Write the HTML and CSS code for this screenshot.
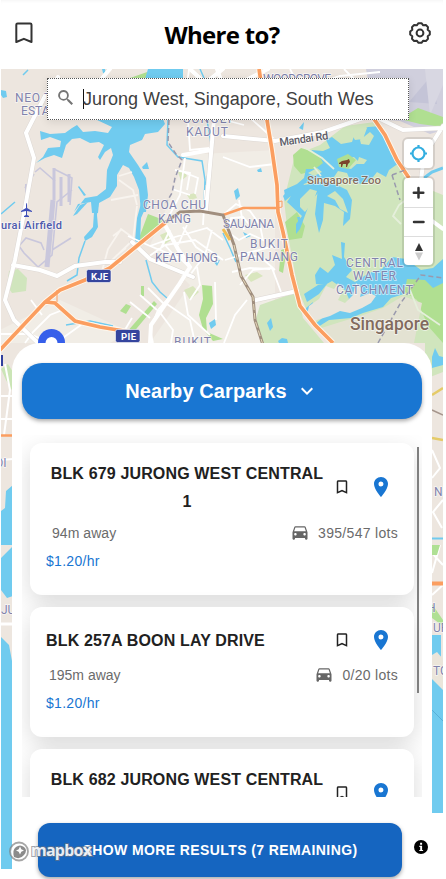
FILE: index.html
```html
<!DOCTYPE html>
<html lang="en">
<head>
<meta charset="utf-8">
<title>Where to?</title>
<link rel="stylesheet" href="styles.css">
</head>
<body>
<svg class="symbols" aria-hidden="true">
  <symbol id="bookmark" viewBox="0 0 24 24"><path d="M17 3H7c-1.100 0-2 .9-2 2v16l7-3 7 3V5c0-1.100-.9-2-2-2zm0 15-5-2.180L7 18V5h10v13z"/></symbol>
  <symbol id="pin" viewBox="0 0 24 24"><path d="M12 2C8.130 2 5 5.130 5 9c0 5.250 7 13 7 13s7-7.750 7-13c0-3.870-3.130-7-7-7zm0 9.500a2.500 2.500 0 1 1 0-5 2.500 2.500 0 0 1 0 5z"/></symbol>
  <symbol id="car" viewBox="0 0 24 24"><path d="M18.920 5.010C18.720 4.420 18.160 4 17.500 4h-11c-.66 0-1.210.42-1.420 1.010L3 11v8c0 .55.45 1 1 1h1c.55 0 1-.45 1-1v-1h12v1c0 .55.45 1 1 1h1c.55 0 1-.45 1-1v-8l-2.080-5.990zM6.500 15c-.83 0-1.500-.67-1.500-1.500S5.670 12 6.500 12s1.500.67 1.500 1.500S7.330 15 6.500 15zm11 0c-.83 0-1.500-.67-1.500-1.500s.67-1.500 1.500-1.500 1.500.67 1.500 1.500-.67 1.500-1.500 1.500zM5 10l1.500-4.500h11L19 10H5z"/></symbol>
</svg>
<div class="app">
  <svg class="map" viewBox="1 69 442 800" width="442" height="800">
    <rect x="1" y="69" width="442" height="800" fill="#ede6df"/>
    <!-- developed land -->
    <g fill="#f1ede6">
      <path d="M185 155L275 150V343H150L190 285L150 245L170 200Z"/>
      <path d="M0 330L60 300L130 332L110 343H0Z"/>
    </g>
    <path d="M366 69H443V130L430 134L400 121L375 119Z" fill="#d0cfdd"/>
    <path d="M409 102l22-26 6 28z" fill="#c4c4d7"/>
    <path d="M425 69H443V85L430 115Z" fill="#d8d7e2"/>
    <!-- parks -->
    <g fill="#d0e5bd">
      <path d="M295 155L320 145L345 126L375 122L393 150L406 180L443 195V343H332L310 318L298 290L288 235L284 200Z"/>
      <path d="M260 305L297 292L303 318L324 343H262L255 322Z"/>
      <path d="M9 271l9-2 9 9-1 13-14 2-5-7z"/>
    </g>
    <g fill="#b0df91">
      <path d="M400 119L418 108L443 117V127L420 124Z"/>
      <path d="M405 268L443 276V343L428 326L417 300L402 290Z"/>
      <path d="M148 214L169 222L141 243L139 238Z"/>
      <path d="M130 78l20-7-4 8zM106 120l12 3 14-1-5-4z"/>
      <path d="M285 222l12-10 8 14-3 12-13 2zM281 250l6-2-4 25-4-2z"/>
      <path d="M202 285l10 1 1 18-7 14 1 14 16 7-10 2-10-12-4-14 4-16z"/>
      <path d="M293 155l8-7 20 6 8 9-12 7-16 4-7-8z"/>
      <path d="M120 311l6-7 5 2-5 8zM141 286h3v10h-3zM126 333l28-32 3 3-25 30z"/>
    </g>
    <g fill="#d9e6be">
      <path d="M178 172l6-2 3 6-6 5zM187 195l8-2 2 5-7 2zM160 235l9-4 5 7-9 6zM245 275l12-3 6 4-12 6zM184 290l9-4 6 6-9 8z"/>
    </g>
    <!-- water -->
    <g fill="#70cbef">
      <path d="M148 69H183V79H145Z"/>
      <path d="M128 119H163L165 124L158 132L145 134L142 140L130 145L129 152L138 165L146 178L148 195L146 212H141L139 190L134 177L129 168L123 165L117 175V186L110 197L99 203L98 213H92L91 202L78 204L74 212L85 198L97 196L106 189L107 170L113 155L111 148L105 152L100 160L98 157L104 145L99 142L90 143L80 138L72 139L66 145L62 158L54 155L45 158L36 163L43 157L48 148L60 147L61 141L50 137L41 140L40 131L50 134L65 133L72 128L77 125L83 132L95 131L108 133L112 127L97 120Z"/>
      <path d="M142 167l5-5 2 7-6 0zM79 186l7 9-2 1-6-9z"/>
      <path d="M93 200H99L97 215L98 227L92 237L85 241L84 237L93 227L94 212Z"/>
      <path d="M88 202L77 214L73 216L80 205Z"/>
      <path d="M142 200H149L141 218L140 243L135 241L137 218Z"/>
      <path d="M1 90l5 1 1 6-4 1-2-3zM102 69l3 0 1 6-3-2z"/>
      <path d="M368 127L382 126L385 139L391 154L399 163L389 170L386 177L377 172L370 181L361 184L350 180L347 173L338 171L334 177L316 179L304 184L300 193L285 196L284 190L297 184L304 178L306 169L315 169L323 163L320 157L311 150L323 151L330 148L326 140L332 137L341 144L352 142L355 133Z"/>
      <path d="M291 187L310 184L326 181L333 190L318 193L310 202L300 229L296 234V224L302 216L287 202L291 196L285 201L283 196Z"/>
      <path d="M318 188L331 182L347 190L352 200L350 219L343 226L344 212L335 206L324 203L323 220L319 233L315 214Z"/>
      <path d="M341 242L345 243L344 257L352 270L346 277L355 282L369 273L382 269L392 257L406 259L421 270L433 268L443 259V283L433 288L425 280L407 279L404 294L391 298L383 307L363 313L351 318L329 320L318 327L314 325L327 314L343 308L349 299L345 290L332 281L325 285L316 284L315 275L320 267L328 273L335 265L332 255L342 259Z"/>
      <path d="M306 308l7-6-2 11-6 2zM304 294l14-9 9-1-8 10-12 8zM267 323l4-5 2 9-3 4zM278 341l4-3 5 1 1 4h-9zM297 217l3 0-1 7zM257 170l4-2 1 4-4 0zM234 191l4-3 2 8-4 4zM299 128l5-6-1 8z"/>
      <path d="M214 262l6-2-3 6zM209 323l6-4 1 6-5 4zM243 232l8 4-5 2z"/>
    </g>
    <g fill="#d0e5bd">
      <path d="M350 132l9-7 8 3-4 11-8 1zM360 140l10-8 4 4-5 9-8-1zM344 160l10-3 5 5-8 7-9-2zM359 157l8 3-3 4-7 0zM308 173l9-5 5 4-8 4z"/>
      <path d="M300 199l10-10 7 2-4 11-8 10-5-5zM327 196l8-5 8 8 5 14-8-4-5-9z"/>
    </g>
    <path d="M337 159l11-5 8 6-8 9-9-2z" fill="#b0df91"/>
    <path d="M309 306l10-7 7-13 8 3 4-6 5 7-5 10 7 3 8-8 3-12 6 6-2 8 10-4 6 3-5 7-9 5-12 5-10-2-10 5-13 4-5 4-5-9z" fill="#e9e5dc"/>
    <path d="M318 329l45-14 20-7 20-12 19 7-8 40H332z" fill="#e3e2d2"/>
    <g fill="none" stroke="#70cbef" stroke-width="1.500">
      <path d="M85 241L79 258L77 275L67 281M146 260L152 282L160 292L167 298M66 325L90 321L113 326M168 120L167 145L178 157L202 161L205 180L204 205M207 120L212 150L206 185M200 69L204 78M23 75L28 70M1 214L15 202M223 233L230 248L236 262"/>
      <path d="M424 178L432 172L443 168" stroke-width="3"/>
    </g>
    <!-- airfields -->
    <g fill="none" stroke="#c9c7dc">
      <path d="M54 168V200M61 177V206M69 174V202" stroke-width="3"/>
      <path d="M53 200L47 267" stroke-width="5"/>
      <path d="M54 169L72 178L70 205M72 190L57 202L52 255L38 267L24 253L19 246L26 238L41 243L44 250M52 250L71 238M34 174L25 188M35 172L40 168L55 181" stroke-width="1.600"/>
      <path d="M27 184V200" stroke-width="4"/>
    </g>
    <!-- minor roads -->
    <g fill="none" stroke="#fff" stroke-width="1.800">
      <path d="M101 275L108 249L121 229L132 237M113 236L121 230M137 206L133 240L109 263M116 256L126 248M119 180L133 190L137 205M119 176L132 172M111 200L138 195" stroke="#f8f4ef"/>
      <path d="M128 236L150 246L180 258L190 268L180 285L158 310L150 330L153 343M150 246L175 237L207 228L223 240M148 257L165 245L195 240L223 260M183 227L196 247L218 262M170 230L160 250M178 260L165 245M187 225L178 245M212 230L205 255L190 275"/>
      <path d="M185 158L180 195L168 218M185 90L220 94L260 80M189 70L186 90L190 150L210 148M223 80L210 95M172 189L190 195M175 170L190 173L187 190M183 172L198 178L195 194M205 190L203 225"/>
      <path d="M130 302L150 318M140 295L157 310M148 288L164 304M120 338L132 318M158 310L173 330L171 343M164 302L190 320L195 343M184 292L188 315L210 335M197 267L200 285L190 300M215 282L216 320"/>
      <path d="M223 215L236 204L250 211L260 225L263 240L250 234L239 240L229 233L231 218L243 217L252 228M225 260L245 254L262 258L275 270M232 272L250 268L270 269M240 285L253 270L272 268L281 292M247 253L275 246M224 343L235 315L247 300M239 200L244 230"/>
      <path d="M25 343L33 332L50 315L60 311M60 340L85 322L95 327M0 334H29L52 343M5 343L13 337M31 300L42 315M24 327L37 343"/>
      <path d="M230 100L275 140M223 157L250 167L275 164M225 120L244 125M290 69L299 86L320 80M297 90L340 76L380 72M344 69L359 84"/>
      <path d="M304 147L322 158L334 169M314 167L321 176M411 196L399 205L393 216L401 224M410 290L418 310L440 325M409 205L443 228" stroke="#e5efdb"/>
    </g>
    <!-- major roads -->
    <g fill="none" stroke="#ddd8d4" stroke-width="5" stroke-linecap="round">
      <path d="M46 94L26 133L34 158L25 208L15 260L5 300L14 320L38 343M13 265L40 270L57 276L75 266L105 262L120 262M132 242L150 259L193 277M214 119L210 165L206 210"/>
      <path d="M223 136L275 141L323 132L372 115L403 130L443 128M443 126L424 156L421 180M256 300L297 291"/>
    </g>
    <g fill="none" stroke="#fff" stroke-width="4" stroke-linecap="round">
      <path d="M46 94L26 133L34 158L25 208L15 260L5 300L14 320L38 343M13 265L40 270L57 276L75 266L105 262L120 262M132 242L150 259L193 277M214 119L210 165L206 210M183 155L211 150M165 225L178 249L190 267L178 286L151 325L150 343"/>
      <path d="M223 136L275 141L323 132L372 115L403 130L443 128M443 126L424 156L421 180M256 300L297 291M50 92L58 77M110 69L97 84M217 69L222 83M420 212L443 229"/>
      <path d="M223 69L205 83L190 69M240 83L268 69"/>
    </g>
    <g fill="none" stroke="#fff8ed" stroke-width="5.500">
      <path d="M0 350L45 302L60 290L85 280L110 268L166 222M45 302L55 303L75 321L100 327L130 332"/>
      <path d="M259 69L267 120L272 150L277 185L278 212L283 232L292 275L300 306L315 325L333 343M374 119L385 135L397 160L409 178"/>
    </g>
    <g fill="none" stroke="#fb9e60" stroke-width="3.700">
      <path d="M0 350L45 302L60 290L85 280L110 268L166 222M45 302L55 303L75 321L100 327L130 332"/>
      <path d="M259 69L267 120L272 150L277 185L278 212L283 232L292 275L300 306L315 325L333 343M374 119L385 135L397 160L409 178"/>
      <path d="M223 215L243 208L277 208" stroke-width="2.500"/>
      <path d="M57 302V290M277 208l5-1 0-6-5 1" stroke-width="1"/>
    </g>
    <g fill="none">
      <path d="M166 222L180 212L200 211L223 215L234 245L241 276L253 297L255 320L263 345" stroke="#a08e7e" stroke-width="3"/>
      <path d="M234 245L241 276L253 297L255 320L263 345" stroke="#e5d9ba" stroke-dasharray="6 3"/>
      <path d="M223 229L230 240" stroke="#f0bd55" stroke-width="3"/>
      <path d="M169 120L168 142L176 154L182 160L175 178L172 193L166 203M378 343L400 304L421 275L443 278M392 175L400 200M392 175L405 170" stroke="#9999ad" stroke-width="1.500" stroke-dasharray="5 3"/>
    </g>
    <!-- strip west of the sheet -->
    <path d="M1 369l7-5 5 8v20l-7-12z" fill="#cbe5b6"/>
    <path d="M1 396H13M1 419H13M5 364L10 390L4 435M1 460L13 459" fill="none" stroke="#fff" stroke-width="2"/>
    <path d="M1 435.500H13" stroke="#fb9e60" stroke-width="2.500"/>
    <path d="M1 545V511L5 508L6 491L13 485V545ZM1 558L13 546V596L7 598L1 590ZM1 637L9 645L12 661V869H1Z" fill="#70cbef"/>
    <path d="M1 624H12" stroke="#fff" stroke-width="3"/>
    <path d="M1 355h2v11H1z" fill="#31409d"/>
    <!-- strip east of the sheet -->
    <path d="M425 343H443V372L425 379Z" fill="#d0e5bd"/>
    <path d="M432 357l3-9 4 8 4 1v8l-11 3z" fill="#70cbef"/>
    <path d="M432 395L443 388M432 438L443 440" stroke="#e5cb68" stroke-width="2.500"/>
    <path d="M432 410L443 415" stroke="#a5958c" stroke-width="1.500"/>
    <path d="M432 538.500H443" stroke="#70cbef" stroke-width="2"/>
    <path d="M432 450l8 18-8 10M443 500l-10 12 9 16M432 553l11 12M440 545l-8 28M432 595l11-10" fill="none" stroke="#fff" stroke-width="2"/>
    <path d="M432 545h8l-3 10h-5zM432 604l11 16v6l-11-8z" fill="#afe094"/>
    <path d="M432 583.500H443" stroke="#fb9e60" stroke-width="4"/>
    <path d="M432 635h9v28l2 4v150h-11z" fill="#70cbef"/>
    <path d="M432 655l5-3 6 7v31l-11-11z" fill="#ebe5da"/>
    <path d="M432 710L443 721" stroke="#58afd8"/>
    <!-- labels -->
    <g class="area">
      <text x="15" y="102" textLength="59">NEO TIEW</text><text x="21" y="115" textLength="42">ESTATE</text>
      <text x="263" y="83" textLength="68">WOODGROVE</text>
      <text x="183" y="123" textLength="48">SUNGEI</text><text x="186" y="136" textLength="42">KADUT</text>
      <text x="143" y="209" textLength="63">CHOA CHU</text><text x="158" y="223" textLength="33">KANG</text>
      <text x="155" y="262" textLength="63">KEAT HONG</text>
      <text x="223" y="228" textLength="51">SAUJANA</text>
      <text x="250" y="248" textLength="38">BUKIT</text><text x="240" y="261" textLength="58">PANJANG</text>
      <text x="174" y="346" textLength="37">BUKIT</text>
      <text x="346" y="267" textLength="57">CENTRAL</text><text x="353" y="280" textLength="43">WATER</text><text x="336" y="294" textLength="77">CATCHMENT</text>
      <text x="434" y="496">N</text><text x="427" y="612">H</text><text x="433" y="632">UR</text><text x="433" y="675">TC</text>
      <text x="-5" y="467">OI</text><text x="1" y="614">JU</text>
    </g>
    <text class="airfield" x="1" y="229" textLength="61">urai Airfield</text>
    <path d="M26 203q1 0 1 2l0 3 5 3v1l-5-1v4l2 1v1h-5v-1l2-1v-4l-5 1v-1l5-3v-3z" fill="#3f4fb8"/>
    <text class="road" x="280" y="146" textLength="49" transform="rotate(-8 280 146)">Mandai Rd</text>
    <text class="zoo" x="307" y="184" textLength="74">Singapore Zoo</text>
    <path d="M339 163l3-2 5-1 2-1 1 3-2 2-1 3h-1v-3h-3l-1 3h-1v-3h-2z" fill="#7b432b"/>
    <text class="city" x="350" y="330" textLength="79">Singapore</text>
    <g class="shield">
      <rect x="86.500" y="269.500" width="24.500" height="13" rx="2"/><text x="91" y="280" textLength="17">KJE</text>
      <rect x="115.500" y="329.500" width="24.500" height="13" rx="2"/><text x="121" y="340" textLength="15">PIE</text>
    </g>
    <circle cx="51.500" cy="342.500" r="13.500" fill="#365fea"/><circle cx="51.500" cy="343" r="6" fill="#fff"/>
  </svg>

  <header class="header">
    <svg class="saved" viewBox="0 0 18 22"><path d="M1.300 20V2.800Q1.300 1.500 2.600 1.500H15.200Q16.500 1.500 16.500 2.800V20L8.900 16.800Z"/></svg>
    <h1>Where to?</h1>
    <svg class="settings" viewBox="-12 -12 24 24"><circle r="3.400"/><path d="M-1.500-9.800H1.500L3.200-7.700L5.900-8L8-5.900L7.700-3.200L9.800-1.500V1.500L7.700 3.200L8 5.900L5.900 8L3.200 7.700L1.500 9.800H-1.500L-3.200 7.700L-5.900 8L-8 5.900L-7.700 3.200L-9.800 1.500V-1.500L-7.700-3.200L-8-5.900L-5.900-8L-3.200-7.700Z"/></svg>
  </header>

  <div class="stage">
    <div class="search">
      <svg viewBox="0 0 18 18"><path fill-rule="evenodd" d="M6.500 1a5.300 5.300 0 1 0 3.200 9.500l.5.500v.8l4.300 4.200 1.500-1.500-4.200-4.300H11l-.5-.5A5.300 5.300 0 0 0 6.500 1zm0 1.900a3.500 3.500 0 1 1 0 7 3.500 3.500 0 0 1 0-7z"/></svg>
      <span class="caret"></span><span>Jurong West, Singapore, South Wes</span>
    </div>
    <div class="controls">
      <div class="group"><div class="control"><svg viewBox="0 0 29 29"><g fill="none" stroke="#33aee0" stroke-width="2.200"><circle cx="14.500" cy="14.500" r="6"/><path d="M14.500 6v3M14.500 20v3M6 14.500h3M20 14.500h3"/></g></svg></div></div>
      <div class="group">
        <div class="control"><svg viewBox="0 0 29 29"><path d="M14.500 10v9.500M9.800 14.700h9.500" stroke="#333" stroke-width="2.500" stroke-linecap="round"/></svg></div>
        <div class="control"><svg viewBox="0 0 29 29"><path d="M10 14h9.500" stroke="#333" stroke-width="2.500" stroke-linecap="round"/></svg></div>
        <div class="control"><svg viewBox="0 0 29 29"><path d="M11 14l4-8 4 8z" fill="#333"/><path d="M11 15.500l4 8 4-8z" fill="#ccc"/></svg></div>
      </div>
    </div>
  </div>

  <main class="sheet">
    <button class="toggle">Nearby Carparks<svg viewBox="0 0 24 24"><path d="M7.400 8.600 12 13.200l4.600-4.600L18 10l-6 6-6-6z"/></svg></button>
    <div class="list">
      <article class="card">
        <div class="top"><h2>BLK 679 JURONG WEST CENTRAL 1</h2><svg class="mark"><use href="#bookmark"/></svg><svg class="pin"><use href="#pin"/></svg></div>
        <div class="info"><span class="near">94m away</span><svg><use href="#car"/></svg><span>395/547 lots</span></div>
        <p>$1.20/hr</p>
      </article>
      <article class="card">
        <div class="top"><h2>BLK 257A BOON LAY DRIVE</h2><svg class="mark"><use href="#bookmark"/></svg><svg class="pin"><use href="#pin"/></svg></div>
        <div class="info"><span class="mid">195m away</span><svg><use href="#car"/></svg><span>0/20 lots</span></div>
        <p>$1.20/hr</p>
      </article>
      <article class="card">
        <div class="top"><h2>BLK 682 JURONG WEST CENTRAL 1</h2><svg class="mark"><use href="#bookmark"/></svg><svg class="pin"><use href="#pin"/></svg></div>
      </article>
      <div class="thumb"></div>
    </div>
    <button class="more">SHOW MORE RESULTS (7 REMAINING)</button>
  </main>
  <svg class="logo" viewBox="0 0 88 23">
    <circle cx="11" cy="11.500" r="9" fill="#fff" fill-opacity=".85" stroke="#777" stroke-opacity=".65" stroke-width="1.800"/>
    <path d="M6 17q-2-7 2-10t8 0 0 8-10 2z" fill="#8b8b8b"/><path d="M12 6.500l1.300 2.700 2.700 1.300-2.700 1.300L12 14.500l-1.300-2.700L8 10.500l2.700-1.300z" fill="#fff"/>
    <text x="23" y="16" textLength="61">mapbox</text>
  </svg>
  <svg class="about" viewBox="0 0 14 14"><circle cx="7" cy="7" r="7"/><path d="M5.300 5.700h2.800v4.200h1v1.200H5.300V9.900h.9V6.900h-.9zM6.100 2.700h2v2h-2z" fill="#fff"/></svg>
</div>
</body>
</html>
```

FILE: styles.css
```css
* { box-sizing: border-box; }
body { margin: 0; background: #fff; font-family: "Liberation Sans", Arial, sans-serif; overflow: hidden; }
.symbols { position: absolute; width: 0; height: 0; }
.app { position: relative; width: 442px; height: 879px; margin-left: 1px; overflow: hidden; display: flex; flex-direction: column; }
.map { position: absolute; left: 0; top: 69px; clip-path: polygon(0 0, 100% 0, 100% 744px, 400px 744px, 400px 100%, 0 100%); }
.map text { font-family: Roboto, sans-serif; paint-order: stroke; stroke: rgba(255,255,255,.65); stroke-width: 1.500px; }
.area text { font-size: 12px; fill: #8183ac; }
.map .airfield { font-size: 11px; font-weight: 500; fill: #4d5aad; }
.map .road { font-size: 11px; font-weight: 500; fill: #5d5d68; }
.map .zoo { font-size: 11.500px; font-weight: 500; fill: #856d5e; }
.map .city { font-size: 17.500px; font-weight: 500; fill: #826b5e; }
.shield rect { fill: #35459e; stroke: #fff; stroke-width: .6; }
.map .shield text { font-size: 9.500px; font-weight: 700; fill: #fff; stroke: none; }

.header { position: relative; height: 69px; padding: 0 11px 4px 14px; display: flex; align-items: center; justify-content: space-between; background: #fff; border-radius: 0 0 12px 12px; box-shadow: inset 0 3px 4px -3px #eee; }
.header svg { fill: none; stroke: #333; stroke-width: 2; stroke-linejoin: round; }
.saved { width: 18px; height: 22px; }
.settings { width: 24px; height: 24px; }
.header h1 { margin: 5px 0 0 3px; font: 700 24px/32px "Open Sans", "Noto Sans", sans-serif; letter-spacing: -.7px; color: #000; }

.stage { position: relative; height: 274px; padding: 9px 10px 0 46px; display: flex; flex-direction: column; }
.search { width: 362px; height: 42px; display: flex; align-items: center; padding-left: 9px; background: #fff; border: 1px dotted #555; box-shadow: 0 2px 8px rgba(0,0,0,.1); font-size: 18px; color: #404040; white-space: nowrap; }
.search svg { width: 18px; height: 18px; margin: -3px 8px 0 0; fill: #757575; }
.caret { width: 1px; height: 20px; margin-right: -1px; background: #111; }
.controls { align-self: flex-end; margin-top: 19px; display: grid; gap: 10px; }
.group { width: 29px; background: #fff; border-radius: 4px; box-shadow: 0 0 0 2px rgba(0,0,0,.1); }
.control { height: 29px; }
.control + .control { border-top: 1px solid #ddd; }
.control svg { display: block; width: 29px; height: 29px; }

.sheet { position: relative; width: 420px; height: 536px; margin-left: 11px; padding: 20px 10px 0; background: #fff; border-radius: 28px 28px 0 0; }
button { border: 0; color: #fff; font-family: inherit; font-weight: 700; }
.toggle { width: 400px; height: 56px; display: flex; align-items: center; justify-content: center; padding: 0; gap: 8px; background: #1976d2; border-radius: 20px; box-shadow: 0 2px 4px rgba(0,0,0,.35); font-size: 20px; letter-spacing: .1px; }
.toggle svg { width: 24px; height: 24px; fill: #fff; }
.list { position: relative; height: 362px; margin-top: 16px; padding: 8px 8px 0; overflow: hidden; display: flex; flex-direction: column; gap: 12px; }
.card { flex: none; padding: 16px; background: #fff; border-radius: 12px; box-shadow: 0 8px 24px rgba(0,0,0,.15); }
.top { display: flex; align-items: center; min-height: 34px; }
.top h2 { max-width: 282px; margin: 1px auto -1px 0; font-size: 16px; line-height: 28px; letter-spacing: .15px; color: #212121; text-align: center; }
.top svg { flex: none; }
.mark { width: 18px; height: 18px; margin-left: 5px; fill: #222; }
.pin { width: 24px; height: 24px; margin: 0 5px 0 18px; fill: #1976d2; }
.info { display: flex; align-items: center; height: 20px; margin-top: 8px; font-size: 14px; letter-spacing: .3px; color: #6b6b6b; }
.near { margin: 0 auto 0 6px; letter-spacing: .05px; }
.mid { margin: 0 auto 0 3px; letter-spacing: 0; }
.info svg { width: 20px; height: 20px; margin-right: 8px; fill: #666; }
.card p { margin: 8px 0; font-size: 14px; line-height: 20px; letter-spacing: .3px; color: #1976d2; }
.thumb { position: absolute; right: 3px; top: 12px; width: 2px; height: 246px; background: #808080; }
.more { display: block; width: 364px; height: 54px; margin: 26px 0 0 16px; padding: 0; background: #1565c0; border-radius: 12px; box-shadow: 0 2px 4px rgba(0,0,0,.35); font-size: 14px; letter-spacing: .4px; white-space: nowrap; }
.logo { position: absolute; left: 7px; top: 840px; width: 88px; height: 23px; }
.logo text { font: 700 16px "Open Sans", sans-serif; fill: #fff; fill-opacity: .9; stroke: #6c7480; stroke-width: 2px; stroke-opacity: .65; paint-order: stroke; }
.about { position: absolute; left: 413px; top: 840px; width: 14px; height: 14px; }
```
